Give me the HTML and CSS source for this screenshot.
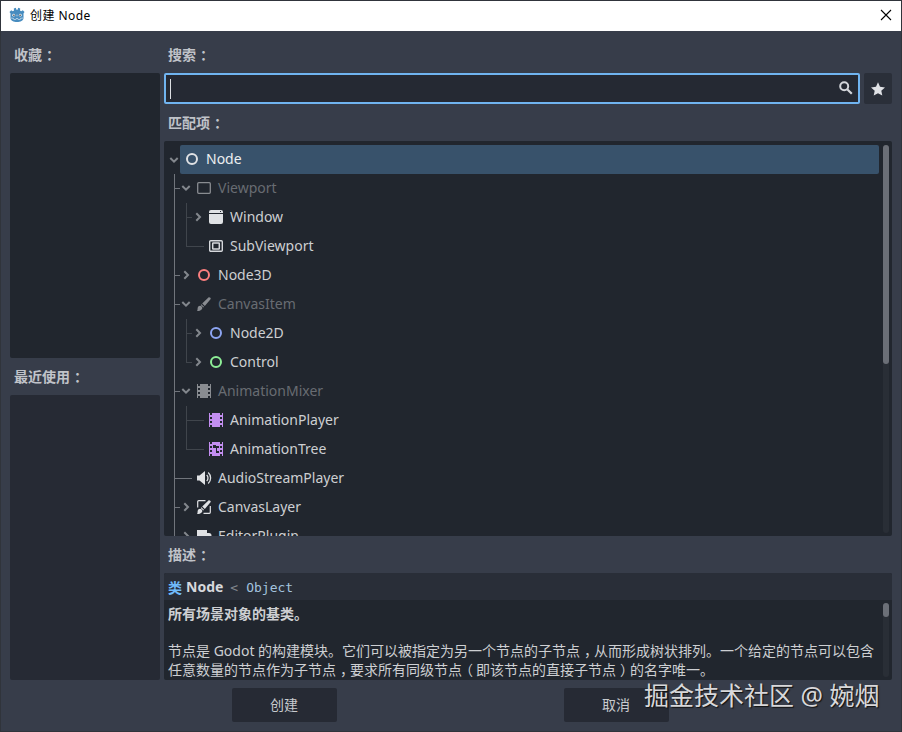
FILE: index.html
```html
<!DOCTYPE html>
<html lang="zh-CN">

<head>
    <meta charset="UTF-8" />
    <title>创建 Node</title>
    <link rel="stylesheet" href="styles.css">
</head>

<body>

    <!-- shared icons -->
    <svg class="defs" width="0" height="0">
        <symbol id="down" viewBox="0 0 12 12"><path d="M2.300 4 6 7.700 9.700 4" fill="none" stroke="#83878d" stroke-width="2" /></symbol>
        <symbol id="right" viewBox="0 0 12 12"><path d="M4.300 2.300 8 6 4.300 9.700" fill="none" stroke="#83878d" stroke-width="2" /></symbol>
        <symbol id="ring" viewBox="0 0 16 16"><circle cx="8" cy="8" r="5" fill="none" stroke="currentColor" stroke-width="2" /></symbol>
    </svg>

    <div class="window">
        <header class="titlebar">
            <svg class="logo" viewBox="0 0 16 16">
                <path d="M.5 5 2.200 3.200l1.600 1L5 3.600 4.800 1.600 6.800.8l.6 2h1.200l.6-2 2 .8L11 3.600l1.200.6 1.600-1L15.500 5l-1 1.500V11c0 2.700-3.200 4-6.500 4s-6.500-1.300-6.500-4V6.500z" fill="#478cbf" />
                <circle cx="4.700" cy="8.200" r="1.400" fill="#e8f1f8" />
                <circle cx="11.300" cy="8.200" r="1.400" fill="#e8f1f8" />
                <circle cx="4.900" cy="8.300" r=".8" fill="#414042" />
                <circle cx="11.100" cy="8.300" r=".8" fill="#414042" />
                <path d="M8 7.600v1.800M2 11l2.400.3.300 1.100 2 .1.300-.9h2l.3.9 2-.1.300-1.100L14 11" fill="none" stroke="#dbe8f2" stroke-width=".7" />
            </svg>
            <span class="title">创建 Node</span>
            <svg class="close" viewBox="0 0 12 12"><path d="m1 1 10 10M11 1 1 11" stroke="#000" stroke-width="1.1" /></svg>
        </header>

        <main class="content">
            <aside class="sidebar">
                <h2 class="label first">收藏<span class="mark">：</span></h2>
                <div class="panel favorites"></div>
                <h2 class="label">最近使用<span class="mark">：</span></h2>
                <div class="panel recent"></div>
            </aside>

            <section class="main">
                <h2 class="label first">搜索<span class="mark">：</span></h2>
                <div class="search-row">
                    <div class="search">
                        <span class="caret"></span>
                        <svg class="icon" viewBox="0 0 16 16"><circle cx="6.200" cy="6.200" r="4" fill="none" stroke="#d3d5da" stroke-width="2" /><path d="m9.200 9.200 4.600 4.600" stroke="#d3d5da" stroke-width="2.200" /></svg>
                    </div>
                    <div class="star">
                        <svg class="icon" viewBox="0 0 16 16"><path d="m8 1.300 2 4.500 5 .6-3.700 3.300 1 4.900L8 12.200l-4.300 2.400 1-4.900L1 6.400l5-.6z" fill="#e0e2e6" /></svg>
                    </div>
                </div>

                <h2 class="label">匹配项<span class="mark">：</span></h2>
                <div class="panel matches">
                    <div class="tree">
                        <div class="row root">
                            <svg class="arrow"><use href="#down" /></svg>
                            <div class="selected"><svg class="icon node"><use href="#ring" /></svg><span class="name">Node</span></div>
                        </div>
                        <ul class="branch">
                            <li>
                                <div class="row abstract">
                                    <svg class="arrow"><use href="#down" /></svg>
                                    <svg class="icon" viewBox="0 0 16 16"><rect x="1.700" y="2.700" width="12.600" height="10.600" rx="1" fill="none" stroke="#898c91" stroke-width="1.300" /></svg>
                                    <span class="name">Viewport</span>
                                </div>
                                <ul class="branch sub">
                                    <li class="row">
                                        <svg class="arrow"><use href="#right" /></svg>
                                        <svg class="icon" viewBox="0 0 16 16"><path d="M1 4V3a2 2 0 0 1 2-2h10a2 2 0 0 1 2 2v1zM1 5h14v8a2 2 0 0 1-2 2H3a2 2 0 0 1-2-2z" fill="#e0e2e5" /><path d="M12 2h1v1h-1z" fill="#21262e" /></svg>
                                        <span class="name">Window</span>
                                    </li>
                                    <li class="row leaf">
                                        <svg class="icon" viewBox="0 0 16 16"><rect x="1.700" y="2.700" width="12.600" height="10.600" rx="1" fill="none" stroke="#d6d8dc" stroke-width="1.400" /><rect x="4.700" y="5" width="6.600" height="6" rx=".5" fill="none" stroke="#d6d8dc" stroke-width="1.500" /></svg>
                                        <span class="name">SubViewport</span>
                                    </li>
                                </ul>
                            </li>
                            <li class="row">
                                <svg class="arrow"><use href="#right" /></svg>
                                <svg class="icon node3d"><use href="#ring" /></svg>
                                <span class="name">Node3D</span>
                            </li>
                            <li>
                                <div class="row abstract">
                                    <svg class="arrow"><use href="#down" /></svg>
                                    <svg class="icon" viewBox="0 0 16 16" fill="#898c91"><path d="M12.700 1.300c.8-.5 2.500.7 2 1.800L8.800 10 6.200 7.500zM5.400 8.300 8 10.800l-.7.8-2.600-2.500zM4 9.700c1.400.2 2.200 1.100 2.400 2.300-.5 2.200-2.900 3.400-5.400 2.700.8-.8.4-1.700.7-3 .3-1.100 1.100-1.900 2.300-2z" /></svg>
                                    <span class="name">CanvasItem</span>
                                </div>
                                <ul class="branch sub">
                                    <li class="row">
                                        <svg class="arrow"><use href="#right" /></svg>
                                        <svg class="icon node2d"><use href="#ring" /></svg>
                                        <span class="name">Node2D</span>
                                    </li>
                                    <li class="row">
                                        <svg class="arrow"><use href="#right" /></svg>
                                        <svg class="icon control"><use href="#ring" /></svg>
                                        <span class="name">Control</span>
                                    </li>
                                </ul>
                            </li>
                            <li>
                                <div class="row abstract">
                                    <svg class="arrow"><use href="#down" /></svg>
                                    <svg class="icon" viewBox="0 0 16 16" fill="#898c91"><path fill-rule="evenodd" d="M1 1h1v2h2V1h8v2h2V1h1v14h-1v-2h-2v2H4v-2H2v2H1zm1 4v2h2V5zm10 0v2h2V5zM2 9v2h2V9zm10 0v2h2V9z" /></svg>
                                    <span class="name">AnimationMixer</span>
                                </div>
                                <ul class="branch sub">
                                    <li class="row leaf">
                                        <svg class="icon" viewBox="0 0 16 16" fill="#c38ef1"><path fill-rule="evenodd" d="M1 1h1v2h2V1h8v2h2V1h1v14h-1v-2h-2v2H4v-2H2v2H1zm1 4v2h2V5zm10 0v2h2V5zM2 9v2h2V9zm10 0v2h2V9z" /></svg>
                                        <span class="name">AnimationPlayer</span>
                                    </li>
                                    <li class="row leaf">
                                        <svg class="icon" viewBox="0 0 16 16" fill="#c38ef1"><path fill-rule="evenodd" d="M1 1h1v2h2V1h8v2h2V1h1v14h-1v-2h-2v2H4v-2H2v2H1zm1 4v2h2V5zm10 0v2h2V5zM2 9v2h2V9zm10 0v2h2V9z" /><path d="M5 4h3v1h3v2H9v3h2v2H8V7H5z" fill="#21262e" /></svg>
                                        <span class="name">AnimationTree</span>
                                    </li>
                                </ul>
                            </li>
                            <li class="row leaf">
                                <svg class="icon" viewBox="0 0 16 16"><path d="M1 5.500h2.500L9 1v14l-5.500-4.500H1z" fill="#e0e2e5" /><path d="M10.700 5c1.700 1.500 1.700 4.500 0 6M12.200 2.500c3.200 3 3.200 8 0 11" fill="none" stroke="#e0e2e5" stroke-width="1.300" /></svg>
                                <span class="name">AudioStreamPlayer</span>
                            </li>
                            <li class="row">
                                <svg class="arrow"><use href="#right" /></svg>
                                <svg class="icon" viewBox="0 0 16 16"><path d="M1.700 8.500V2.700a1 1 0 0 1 1-1H9.500M14.300 7v6.300a1 1 0 0 1-1 1H7.500" fill="none" stroke="#e0e2e5" stroke-width="1.200" /><path d="M12.700 1.300c.8-.5 2.500.7 2 1.800L8.800 10 6.200 7.500zM5.400 8.300 8 10.800l-.7.8-2.600-2.500zM4 9.700c1.400.2 2.200 1.100 2.400 2.300-.5 2.200-2.900 3.400-5.400 2.700.8-.8.4-1.700.7-3 .3-1.100 1.100-1.900 2.300-2z" fill="#e0e2e5" /></svg>
                                <span class="name">CanvasLayer</span>
                            </li>
                            <li class="row">
                                <svg class="arrow"><use href="#right" /></svg>
                                <svg class="icon" viewBox="0 0 16 16"><path d="M1 2h10v3h2a2 2 0 0 1 0 5h-2v4H1z" fill="#e0e2e5" /></svg>
                                <span class="name">EditorPlugin</span>
                            </li>
                        </ul>
                    </div>
                    <div class="scrollbar"><div class="thumb"></div></div>
                </div>

                <h2 class="label">描述<span class="mark">：</span></h2>
                <div class="panel description">
                    <div class="class-line"><b class="kind">类</b><b>Node</b><code class="lt">&lt;</code><code>Object</code></div>
                    <div class="help">
                        <div class="help-text">
                            <p class="brief">所有场景对象的基类。</p>
                            <p>节点是 Godot 的构建模块。它们可以被指定为另一个节点的子节点<span class="mark">，</span>从而形成树状排列。一个给定的节点可以包含<br>任意数量的节点作为子节点<span class="mark">，</span>要求所有同级节点<span class="mark">（</span>即该节点的直接子节点<span class="mark">）</span>的名字唯一。</p>
                        </div>
                        <div class="scrollbar"><div class="thumb"></div></div>
                    </div>
                </div>
            </section>
        </main>

        <footer class="actions">
            <button>创建</button>
            <button>取消</button>
        </footer>
        <div class="watermark">掘金技术社区 @ 婉烟</div>
    </div>

</body>

</html>
```
FILE: styles.css
```css
* {
    box-sizing: border-box;
}

body {
    margin: 0;
    font-family: "Noto Sans", "Noto Sans CJK SC", sans-serif;
    font-size: 14px;
    color: #cdcfd2;
}

.defs {
    position: absolute;
}

.window {
    position: relative;
    display: flex;
    flex-direction: column;
    width: 902px;
    height: 732px;
    overflow: hidden;
    background: #373d4a;
    border: 1px solid #30343b;
}

.titlebar {
    display: flex;
    align-items: center;
    flex: 0 0 30px;
    padding: 0 9px 2px 8px;
    background: #fff;
    color: #000;
    font-size: 12px;
}

.logo {
    width: 16px;
    height: 16px;
    margin-right: 5px;
}

.title {
    flex: 1;
    letter-spacing: 0.45px;
}

.close {
    width: 12px;
    height: 12px;
}

.content {
    display: flex;
    gap: 4px;
    height: 649px;
    padding: 6px 9px 0;
}

.sidebar {
    width: 150px;
}

.main {
    width: 728px;
}

.label {
    height: 37px;
    margin: 0;
    padding-left: 4px;
    font-size: 14px;
    font-weight: 700;
    line-height: 37px;
    color: #c0c3c9;
}

.label.first {
    height: 36px;
    line-height: 34px;
}

/* full-width marks sit in the middle of their cell */
.mark {
    padding: 0 3px 0 4px;
    font-family: "Noto Sans CJK SC", sans-serif;
    font-feature-settings: "halt";
}

.panel {
    background: #21262e;
    border-radius: 2px;
}

.favorites {
    height: 285px;
}

.recent {
    height: 285px;
    background: #262a34;
}

.search-row {
    display: flex;
    gap: 4px;
    height: 31px;
}

.search {
    display: flex;
    justify-content: space-between;
    width: 696px;
    padding: 4px;
    background: #252933;
    border: 2px solid #70b4f0;
    border-radius: 2px;
}

.search .icon {
    margin-top: 1px;
}

.caret {
    width: 1px;
    height: 20px;
    background: #dcdee2;
}

.icon {
    flex: none;
    width: 16px;
    height: 16px;
}

.star {
    display: flex;
    align-items: center;
    justify-content: center;
    width: 28px;
    background: #2a2f39;
    border-radius: 2px;
}

.matches {
    display: flex;
    height: 395px;
    padding: 4px 3px 0 4px;
    overflow: hidden;
}

.tree {
    width: 711px;
    height: 391px;
    overflow: hidden;
}

.row {
    display: flex;
    align-items: center;
    height: 29px;
    padding-bottom: 1px;
}

.row.root {
    padding-bottom: 0;
}

.arrow {
    flex: none;
    width: 12px;
    height: 12px;
    margin-right: 4px;
}

.root .arrow {
    margin-right: 0;
}

.selected {
    display: flex;
    align-items: center;
    flex: 1;
    height: 29px;
    padding: 0 0 1px 4px;
    background: #38526b;
    border-radius: 2px;
    color: #eceef0;
}

.name {
    margin-left: 6px;
    line-height: 20px;
}

.abstract .name {
    color: #686c72;
}

/* the guide line is the list's own background */
.branch {
    --line: #71757c;
    margin: 0 0 0 6px;
    padding: 0;
    list-style: none;
    background: linear-gradient(var(--line), var(--line)) 0 0 / 1px 100% no-repeat;
}

.branch.sub {
    --line: #40454c;
    margin-left: 12px;
    background-size: 1px calc(100% - 14px);
}

.branch .row::before {
    content: "";
    flex: none;
    width: 6px;
    height: 1px;
    background: var(--line);
}

.branch .leaf::before {
    width: 18px;
    margin-right: 4px;
}

.node {
    color: #e0e2e5;
}

.node3d {
    color: #fc7f7f;
}

.node2d {
    color: #8da5f3;
}

.control {
    color: #8eef97;
}

.scrollbar {
    width: 6px;
    margin-left: 4px;
    background: #292e36;
    border-radius: 3px;
}

.thumb {
    height: 219px;
    background: #6b6f77;
    border-radius: 3px;
}

.matches .scrollbar {
    height: 388px;
}

.description {
    height: 107px;
    overflow: hidden;
}

.class-line {
    display: flex;
    align-items: center;
    height: 27px;
    padding-left: 4px;
    background: #292e38;
    color: #d6d8dc;
}

.kind {
    margin-right: 4px;
    color: #70bafa;
}

code {
    padding-top: 2px;
    font-family: "DejaVu Sans Mono", monospace;
    font-size: 13px;
    color: #a3c3df;
}

.lt {
    margin: 0 8px 0 7px;
    color: #81868d;
}

.help {
    display: flex;
    height: 80px;
    padding: 3px 3px 3px 4px;
}

.help-text {
    width: 711px;
    white-space: nowrap;
}

.help p {
    margin: 0;
    line-height: 19px;
}

.help .brief {
    margin: 1px 0 18px;
    font-weight: 700;
}

.help .thumb {
    height: 14px;
}

.actions {
    display: flex;
    gap: 227px;
    padding: 8px 0 0 231px;
}

button {
    width: 105px;
    height: 34px;
    padding: 0 1px 2px 0;
    border: none;
    border-radius: 2px;
    background: #262a34;
    color: #c8cace;
    font: inherit;
}

.watermark {
    position: absolute;
    left: 643px;
    top: 676px;
    font-size: 25px;
    line-height: 36px;
    white-space: nowrap;
    color: #d8d8da;
    text-shadow: 1px 1px 1px #111;
}
```
